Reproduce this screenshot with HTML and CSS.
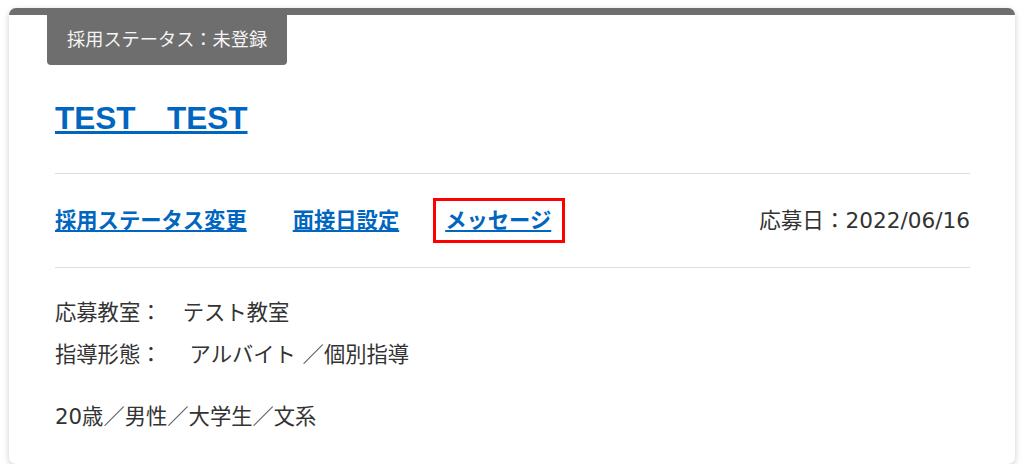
FILE: index.html
```html
<!DOCTYPE html>
<html lang="ja">
<head>
    <meta charset="UTF-8">
    <meta name="viewport" content="width=device-width, initial-scale=1.0">
    <title>応募者詳細</title>
    <link rel="stylesheet" href="styles.css">
</head>
<body>

    <div class="card">
        <div class="status-tag">採用ステータス：未登録</div>

        <div class="card-body">
            <h2 class="name"><a href="#">TEST　TEST</a></h2>

            <div class="actions">
                <a href="#">採用ステータス変更</a>
                <a href="#">面接日設定</a>
                <a href="#" class="marked">メッセージ</a>
                <span class="applied">応募日：2022/06/16</span>
            </div>

            <div class="details">
                <p>応募教室：　テスト教室</p>
                <p>指導形態：　 アルバイト ／個別指導</p>
                <p class="profile">20歳／男性／大学生／文系</p>
            </div>
        </div>
    </div>

</body>
</html>
```

FILE: styles.css
```css
body {
    font-family: "DejaVu Sans", "Noto Sans CJK JP", sans-serif;
    color: #333;
    background-color: #fff;
    margin: 0;
    padding: 8px 9px 0;
}
a {
    color: #0066c0;
}
.card {
    background: white;
    border-top: 7px solid #6e6e6e;
    border-radius: 7px;
    box-shadow: 0px 2px 6px rgba(0, 0, 0, 0.2);
}
.status-tag {
    display: inline-block;
    margin-left: 38px;
    padding: 10px 20px;
    line-height: 30px;
    font-size: 18.2px;
    color: #f4f4f4;
    background-color: #6e6e6e;
    border-radius: 0 0 4px 4px;
}
.card-body {
    padding: 0 45px 26px 46px;
}
.name {
    margin: 33px 0 0;
    padding-bottom: 35px;
    font-family: "Liberation Sans", "Noto Sans CJK JP", sans-serif;
    font-size: 31.5px;
    line-height: 40px;
    font-weight: bold;
    border-bottom: 1px solid #ddd;
}
.actions {
    display: flex;
    align-items: center;
    gap: 46px;
    padding: 31px 0;
    line-height: 31px;
    font-size: 21.3px;
    border-bottom: 1px solid #ddd;
}
.actions a {
    font-weight: bold;
}
.marked {
    position: relative;
}
.marked::after {
    content: "";
    position: absolute;
    top: -7px;
    bottom: -7px;
    left: -12px;
    right: -14px;
    border: 3px solid #f00;
}
.applied {
    margin-left: auto;
    font-size: 21.6px;
}
.details {
    padding-top: 24px;
    font-size: 21.3px;
}
.details p {
    margin: 0;
    line-height: 42px;
}
.details .profile {
    margin-top: 20px;
}
```
